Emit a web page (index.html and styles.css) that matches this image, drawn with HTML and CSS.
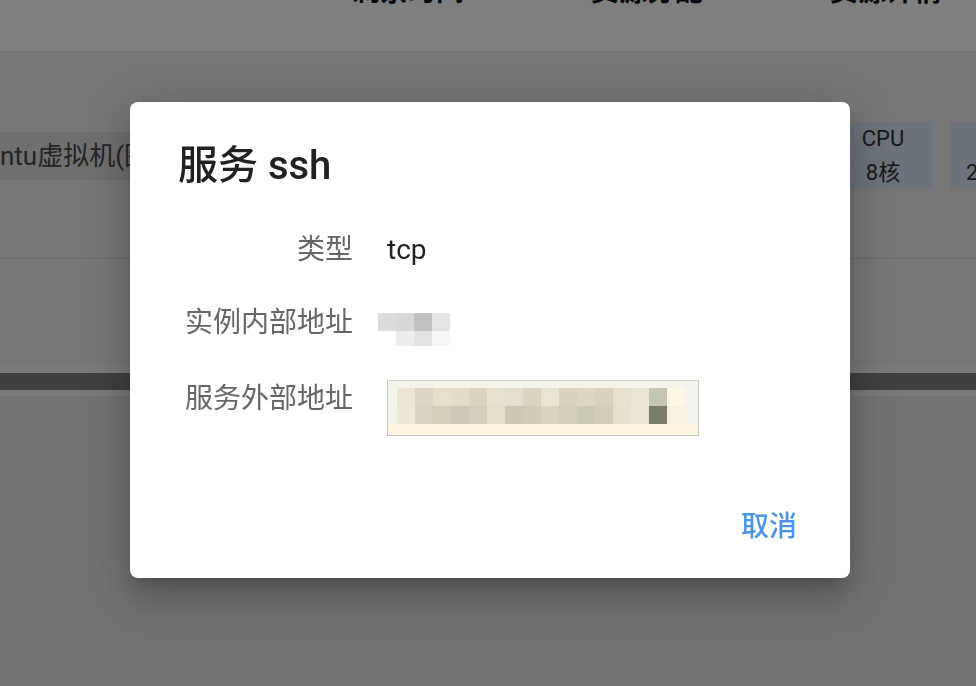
FILE: index.html
```html
<!DOCTYPE html>
<html lang="zh">
<head>
<meta charset="utf-8">
<title>服务 ssh</title>
<link rel="stylesheet" href="styles.css">
</head>
<body>
<div class="page">
  <div class="thead">
    <span>剩余时间</span>
    <span>资源分配</span>
    <span>资源详情</span>
  </div>
  <div class="row">
    <div class="name">ntu虚拟机(图形界面)</div>
    <div class="res"><div>CPU</div><div>8核</div></div>
    <div class="res"><div>内存</div><div>256GB</div></div>
  </div>
  <div class="row2"></div>
  <div class="scroll"><div class="thumb"></div></div>
</div>
<div class="overlay"></div>
<div class="dialog">
  <h2 class="title">服务 ssh</h2>
  <div class="fields">
    <div class="label">类型</div>
    <div class="value">tcp</div>
    <div class="label">实例内部地址</div>
    <div class="value"><div class="pix-in"></div></div>
    <div class="label">服务外部地址</div>
    <div class="value"><div class="pix-out"></div></div>
  </div>
  <div class="actions"><button class="btn">取消</button></div>
</div>
</body>
</html>
```
FILE: styles.css
```css
* { box-sizing: border-box; }
html, body { margin: 0; padding: 0; }
body {
  width: 976px;
  height: 686px;
  overflow: hidden;
  font-family: Roboto, "Noto Sans CJK SC", sans-serif;
}
.page {
  height: 686px;
  background: #e6e6e6;
  overflow: hidden;
}
.thead {
  height: 53px;
  background: #fff;
  border-bottom: 2px solid #e6e6e6;
  display: flex;
  align-items: flex-start;
  padding-left: 352px;
  gap: 127px;
}
.thead span {
  font-size: 28px;
  line-height: 28px;
  font-weight: 700;
  color: #111;
  margin-top: -22px;
  white-space: nowrap;
}
.row {
  height: 206px;
  background: #eeeeee;
  border-bottom: 1px solid #d8d8d8;
  display: flex;
  align-items: center;
}
.name {
  flex: 0 0 130px;
  height: 48px;
  line-height: 48px;
  background: #dedede;
  font-size: 26px;
  color: #4a4a4a;
  white-space: nowrap;
  overflow: hidden;
  margin-right: 704px;
}
.res {
  flex: 0 0 98px;
  height: 67px;
  background: #d8e6f6;
  text-align: center;
  font-size: 22px;
  line-height: 34px;
  color: #333;
  margin-right: 18px;
  white-space: nowrap;
}
.row2 {
  height: 106px;
  background: #eeeeee;
}
.scroll {
  background: #f4f4f4;
  padding: 8px 0 6px;
}
.thumb {
  height: 17px;
  background: #808080;
}
.overlay {
  position: fixed;
  inset: 0;
  background: rgba(0, 0, 0, 0.5);
}
.dialog {
  position: absolute;
  left: 130px;
  top: 102px;
  width: 720px;
  height: 476px;
  background: #fff;
  border-radius: 8px;
  box-shadow: 0 11px 15px -7px rgba(0,0,0,.2), 0 24px 38px 3px rgba(0,0,0,.14), 0 9px 46px 8px rgba(0,0,0,.12);
  padding: 41px 53px 31px 48px;
  display: flex;
  flex-direction: column;
}
.title {
  margin: 0;
  font-size: 40px;
  line-height: 46px;
  font-weight: 500;
  color: #212121;
}
.fields {
  margin-top: 41px;
  display: grid;
  grid-template-columns: 175px 1fr;
  column-gap: 34px;
  row-gap: 33px;
  align-items: start;
}
.label {
  font-size: 28px;
  line-height: 40px;
  text-align: right;
  color: #666;
  white-space: nowrap;
}
.value {
  font-size: 28px;
  line-height: 40px;
  color: #222;
}
.pix-in {
  width: 72px;
  height: 33px;
  margin-top: 10px;
  margin-left: -9px;
  background:
    linear-gradient(to right, #dcdcdc 0 18px, #d8d8d8 0 36px, #c0c0c0 0 54px, #e4e4e4 0 72px) 0 0 / 72px 18px no-repeat,
    linear-gradient(to right, transparent 0 18px, #ececec 0 36px, #e2e2e2 0 54px, #f6f6f6 0 72px) 0 18px / 72px 15px no-repeat;
}
.pix-out {
  width: 312px;
  height: 56px;
  margin-top: 1px;
  border: 1px solid #c4c4c4;
  border-top-color: #d8d6cf;
  background:
    linear-gradient(to right, #ede5d3 0 18px, #ddd5c3 0 36px, #e5dfcc 0 54px, #e3dcc9 0 72px, #dad3bf 0 90px, #e6e0cd 0 108px, #e4dece 0 126px, #d9d3bf 0 144px, #e9e3d1 0 162px, #d8d1bd 0 180px, #dcd6c2 0 198px, #d8d1bd 0 216px, #e6e0cc 0 234px, #eae5d3 0 252px, #c8c4b2 0 270px, #fdf7e3 0 288px) 9px 7px / 288px 18px no-repeat,
    linear-gradient(to right, #ede7d5 0 18px, #d9d2c0 0 36px, #d5cfbc 0 54px, #d0c8b6 0 72px, #d5cebc 0 90px, #e3ddca 0 108px, #cec7b4 0 126px, #d2cbb8 0 144px, #d9d3c0 0 162px, #d4cebb 0 180px, #cccab5 0 198px, #d3cdba 0 216px, #e4dfcb 0 234px, #e8e4d1 0 252px, #7e7a6c 0 270px, #f9f2e0 0 288px) 9px 25px / 288px 18px no-repeat,
    linear-gradient(#f6f3ea 0 43px, #fdf5df 43px) 0 0 / 100% 100% no-repeat;
}
.actions {
  margin-top: auto;
  display: flex;
  justify-content: flex-end;
}
.btn {
  border: 0;
  background: transparent;
  padding: 0;
  font-family: Roboto, "Noto Sans CJK SC", sans-serif;
  font-size: 28px;
  line-height: 40px;
  font-weight: 500;
  color: #4a94e6;
  cursor: pointer;
}
```
